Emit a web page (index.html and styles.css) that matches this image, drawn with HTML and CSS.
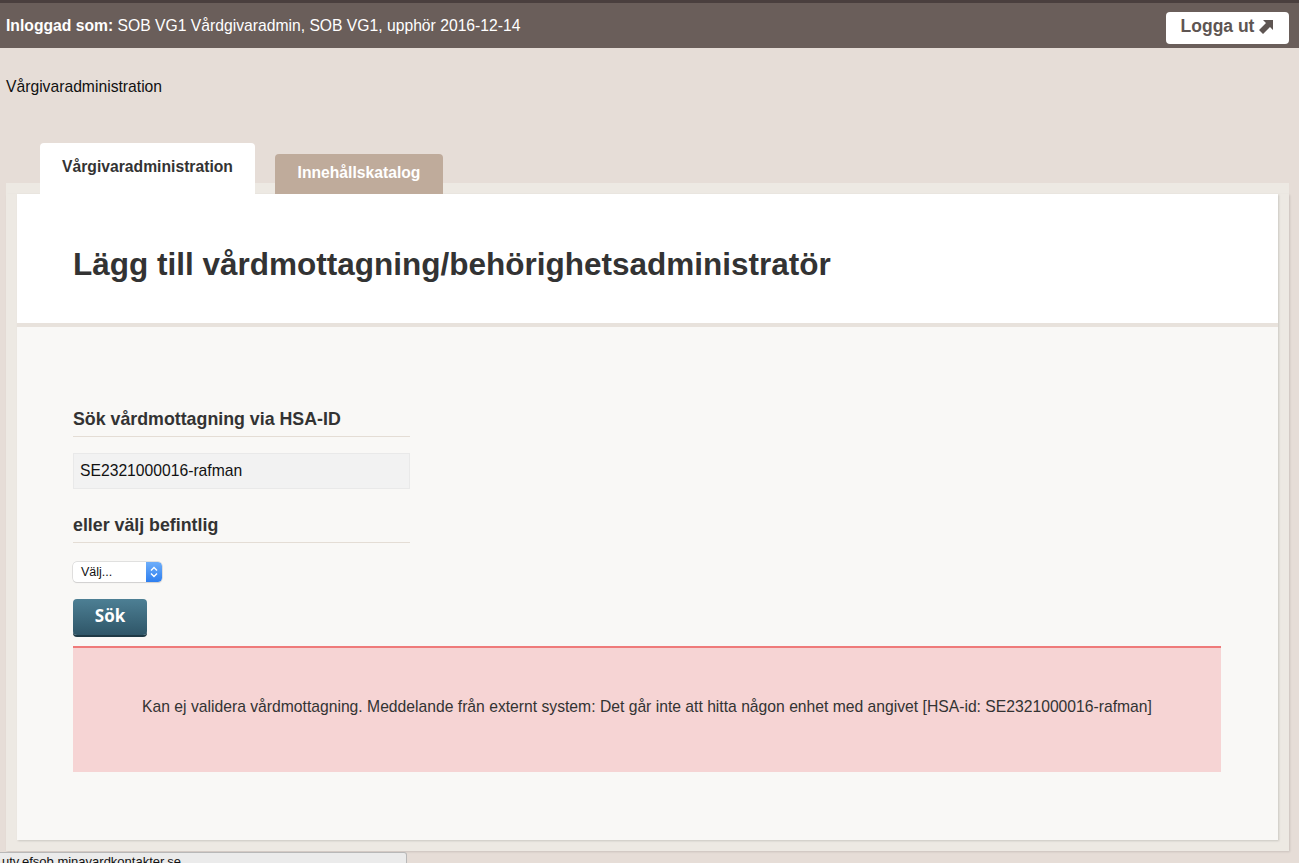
FILE: index.html
```html
<!DOCTYPE html>
<html lang="sv">
<head>
<meta charset="utf-8">
<title>Vårgivaradministration</title>
<link rel="stylesheet" href="styles.css">
</head>
<body>
<header class="topbar">
  <div class="user"><strong>Inloggad som:</strong> SOB VG1 Vårdgivaradmin, SOB VG1, upphör 2016-12-14</div>
  <a class="logout" href="#">Logga ut
    <svg class="logout-icon" width="15" height="15" viewBox="0 0 15 15"><polygon points="4,1 14,1 14,11 11,8 4,15 0,11 7,4" fill="#5e5552"/></svg>
  </a>
</header>
<div class="crumb">Vårgivaradministration</div>
<nav class="tabs">
  <div class="tab active">Vårgivaradministration</div>
  <div class="tab inactive">Innehållskatalog</div>
</nav>
<div class="frame">
  <main class="panel">
    <div class="panel-head">
      <h1>Lägg till vårdmottagning/behörighetsadministratör</h1>
    </div>
    <div class="panel-body">
      <h3 class="sec">Sök vårdmottagning via HSA-ID</h3>
      <div class="input">SE2321000016-rafman</div>
      <h3 class="sec sec2">eller välj befintlig</h3>
      <div class="select">
        <span class="select-text">Välj...</span>
        <span class="select-arrow"><svg width="8" height="12" viewBox="0 0 8 12"><polyline points="1,4.5 4,1.5 7,4.5" fill="none" stroke="#fff" stroke-width="1.4"/><polyline points="1,7.5 4,10.5 7,7.5" fill="none" stroke="#fff" stroke-width="1.4"/></svg></span>
      </div>
      <button class="btn">Sök</button>
      <div class="alert">Kan ej validera vårdmottagning. Meddelande från externt system: Det går inte att hitta någon enhet med angivet [HSA-id: SE2321000016-rafman]</div>
    </div>
  </main>
</div>
<div class="status">utv.efsob.minavardkontakter.se</div>
</body>
</html>
```
FILE: styles.css
```css
* { box-sizing: border-box; }
html, body { margin: 0; padding: 0; }
body {
  background: #e6ddd7;
  font-family: "Liberation Sans", Arial, sans-serif;
  color: #222;
  font-size: 15.7px;
  min-height: 863px;
}
.topbar {
  height: 48px;
  background: #6a5e5a;
  border-top: 3px solid #4a3f3e;
  display: flex;
  align-items: center;
  justify-content: space-between;
  padding: 0 10px 0 6px;
  color: #fff;
  font-size: 15.7px;
}
.user strong { font-weight: bold; }
.logout {
  display: flex;
  align-items: center;
  gap: 5px;
  width: 123px;
  height: 32px;
  margin-top: 4px;
  background: #fff;
  border-radius: 4px;
  justify-content: center;
  color: #5e5552;
  font-weight: bold;
  font-size: 17.5px;
  text-decoration: none;
  padding-bottom: 3px;
}
.logout-icon { margin-top: 1px; }
.crumb {
  margin-top: 29px;
  margin-left: 6px;
  line-height: 20px;
  font-size: 15.7px;
  color: #111;
}
.tabs {
  margin: 46px 10px 0 6px;
  padding-left: 34px;
  display: flex;
  align-items: flex-end;
  gap: 20px;
  height: 51px;
  background: linear-gradient(to bottom, transparent 40px, #ede9e3 40px);
}
.tab {
  border-radius: 4px 4px 0 0;
  font-weight: bold;
  font-size: 15.7px;
  display: flex;
  justify-content: center;
}
.tab.active {
  width: 215px;
  height: 51px;
  background: #fff;
  color: #333;
  padding-top: 15px;
}
.tab.inactive {
  width: 168px;
  height: 40px;
  background: #bfab9b;
  color: #fff;
  padding-top: 10px;
}
.frame {
  margin: 0 10px 0 6px;
  background: #ede9e3;
  padding: 0 11px 11px 11px;
  box-shadow: 1px 1px 2px rgba(0,0,0,0.12);
}
.panel {
  background: #f9f8f6;
  box-shadow: 1px 1px 2px rgba(0,0,0,0.15);
}
.panel-head {
  background: #fff;
  height: 133px;
  padding: 51px 56px 0 56px;
  border-bottom: 4px solid #e8e2dc;
}
.panel-head h1 {
  margin: 0;
  font-size: 31.5px;
  line-height: 38px;
  color: #333;
  font-weight: bold;
}
.panel-body {
  padding: 82px 57px 68px 56px;
}
.sec {
  margin: 0;
  width: 337px;
  font-size: 17.8px;
  line-height: 21px;
  font-weight: bold;
  color: #333;
  padding-bottom: 6px;
  border-bottom: 1px solid #e4ddd5;
}
.sec2 { margin-top: 26px; }
.input {
  margin-top: 16px;
  width: 337px;
  height: 36px;
  background: #f2f2f2;
  border: 1px solid #e9e9e9;
  padding: 0 6px;
  display: flex;
  align-items: center;
  font-size: 15.7px;
  color: #111;
}
.select {
  margin-top: 19px;
  width: 89px;
  height: 20px;
  border-radius: 4px;
  background: #fff;
  box-shadow: 0 0 0 0.5px #c8c8c8, 0 1px 1px rgba(0,0,0,0.12);
  display: flex;
  align-items: center;
  justify-content: space-between;
  font-size: 12.5px;
  color: #111;
  overflow: hidden;
}
.select-text { padding-left: 8px; }
.select-arrow {
  width: 16px;
  height: 20px;
  background: linear-gradient(#6eaefa, #2e7ff0);
  display: flex;
  align-items: center;
  justify-content: center;
  border-radius: 0 4px 4px 0;
}
.btn {
  display: block;
  margin-top: 17px;
  width: 74px;
  height: 36px;
  border: 0;
  border-radius: 4px;
  background: linear-gradient(#4d7f94, #2f5668);
  box-shadow: 0 2px 0 #1e3945;
  color: #fff;
  font-family: "Open Sans", "Liberation Sans", sans-serif;
  font-weight: bold;
  font-size: 17px;
  padding: 0 0 3px 0;
}
.alert {
  margin-top: 11px;
  height: 126px;
  background: #f6d4d4;
  border-top: 2px solid #ef7a7a;
  display: flex;
  align-items: center;
  justify-content: center;
  font-size: 15.7px;
  color: #333;
  padding-bottom: 6px;
}
.status {
  position: fixed;
  left: 0;
  top: 852px;
  width: 407px;
  height: 20px;
  background: #ebebeb;
  border: 1px solid #b8b8b8;
  border-left: 0;
  border-radius: 0 3px 0 0;
  font-size: 13px;
  color: #111;
  padding: 2px 0 0 2px;
  line-height: 14px;
}
```
